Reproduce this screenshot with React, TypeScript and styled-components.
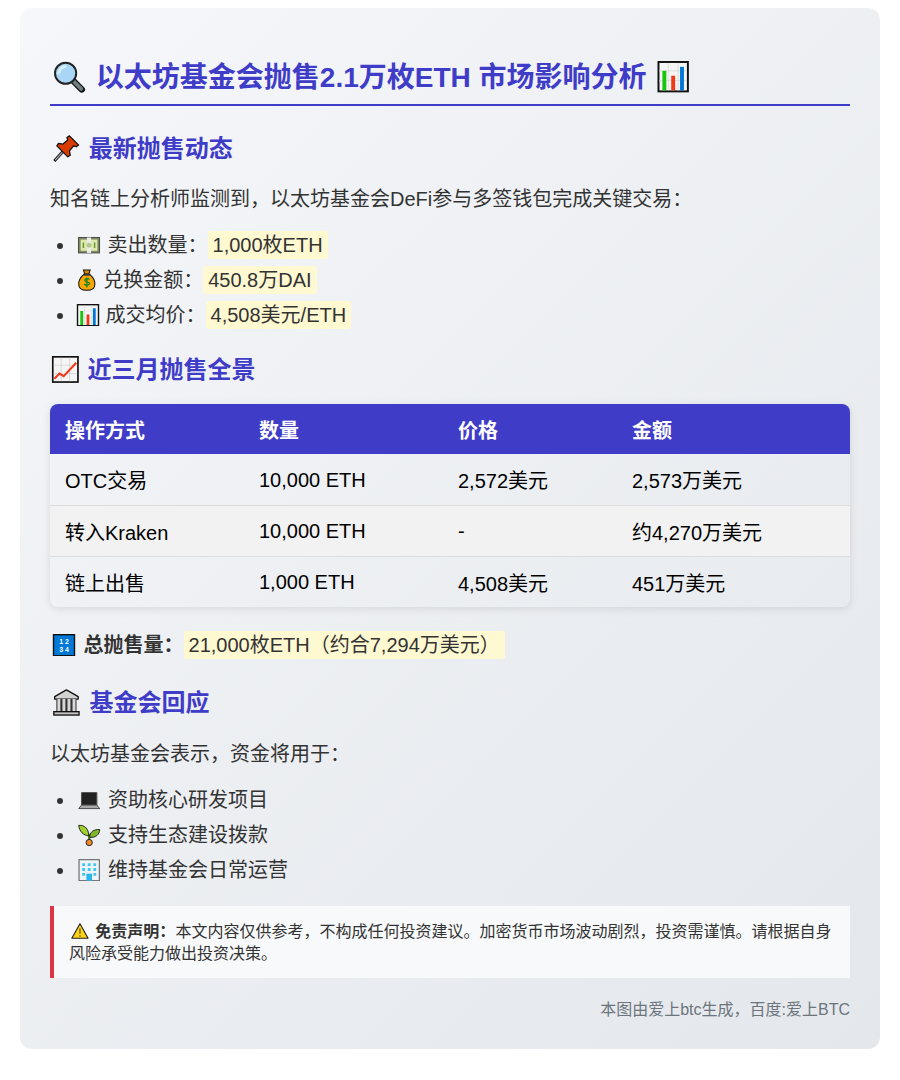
import React from "react";
import styled, { createGlobalStyle } from "styled-components";

const Global = createGlobalStyle`
  html, body { background: #fff; }
  body {
    margin: 0;
    padding: 8px 20px 31px;
    font-family: "Liberation Sans", "Noto Sans CJK SC", sans-serif;
    color: #333;
  }
`;

const Card = styled.article`
  padding: 30px;
  border-radius: 12px;
  background: linear-gradient(135deg, #f5f7fa 0%, #e4e7eb 100%);
  font-size: 20px;
  line-height: 35px;
`;

const Title = styled.h1`
  margin: 21px 0 0;
  padding-bottom: 7px;
  border-bottom: 2px solid #3f3cc8;
  color: #3f3cc8;
  font-size: 28px;
  line-height: 38px;
  font-weight: 700;
`;

const Heading = styled.h2<{ $top: number }>`
  margin: ${(p) => p.$top}px 0 0;
  color: #3f3cc8;
  font-size: 24px;
  line-height: 34px;
  font-weight: 700;
`;

const Para = styled.p<{ $top: number }>`
  margin: ${(p) => p.$top}px 0 0;
`;

const List = styled.ul`
  margin: 11px 0 0;
  padding: 0 0 0 26px;
`;

const Item = styled.li`
  margin: 0;
`;

const Mark = styled.span`
  padding: 3px 5px;
  border-radius: 3px;
  background: #fff9d2;
`;

const TableCard = styled.table`
  width: 100%;
  margin-top: 17px;
  border-collapse: separate;
  border-spacing: 0;
  table-layout: fixed;
  border-radius: 8px;
  overflow: hidden;
  box-shadow: 0 2px 8px rgba(0, 0, 0, 0.1);
  font-size: 20px;
  line-height: 30px;
  color: #000;
`;

const HeadCell = styled.th<{ $w: number }>`
  box-sizing: border-box;
  width: ${(p) => p.$w}px;
  height: 50px;
  padding: 3px 15px 0;
  background: #3f3cc8;
  color: #fff;
  font-size: 20px;
  font-weight: 700;
  text-align: left;
`;

const Row = styled.tr`
  &:nth-child(even) { background: #f2f2f2; }
`;

const Cell = styled.td<{ $cjk: boolean }>`
  box-sizing: border-box;
  height: 51px;
  padding: ${(p) => (p.$cjk ? "3px" : "0")} 15px 0;
  border-bottom: 1px solid #ddd;
  ${Row}:first-child & { height: 52px; }
  ${Row}:last-child & { height: 50px; border-bottom: 0; }
`;

const Note = styled.aside`
  margin-top: 18px;
  padding: 15px 15px 13px;
  border-left: 4px solid #dc3545;
  background: #f8f9fa;
  font-size: 16px;
  line-height: 22px;
`;

const Foot = styled.footer`
  margin-top: 23px;
  color: #6c757d;
  font-size: 16px;
  line-height: 18px;
  text-align: right;
`;

const Glyph = styled.svg<{ $adv: number }>`
  display: inline-block;
  width: ${(p) => p.$adv}em;
  height: 1.12em;
  vertical-align: -0.2em;
`;

const Ink = "#111";
type G = { adv: number };

const Search = ({ adv }: G) => (
  <Glyph $adv={adv} viewBox="0 0 32 32">
    <path d="M20 20l9 9" stroke="#111" strokeWidth="6.500" strokeLinecap="round" />
    <path d="M21 21l7.500 7.500" stroke="#6f8083" strokeWidth="3.800" strokeLinecap="round" />
    <circle cx="12.500" cy="12.500" r="10.800" fill="#a9d6f6" stroke="#222" strokeWidth="2" />
    <path d="M5.500 13a7.500 7.500 0 0 1 7.500-7.500" stroke="#d8effc" strokeWidth="3" fill="none" />
  </Glyph>
);

const Bars = ({ adv }: G) => (
  <Glyph $adv={adv} viewBox="0 0 32 32">
    <rect x="1" y="1" width="30" height="30" fill="#f5f5f5" stroke={Ink} strokeWidth="2" />
    <path d="M2 10h28M2 20h28M11 2v28M21 2v28" stroke="#dcdcdc" strokeWidth="1" />
    <rect x="5" y="10" width="4" height="20" fill="#16c60c" />
    <rect x="14" y="15" width="4" height="15" fill="#f03a17" />
    <rect x="23" y="6" width="4" height="24" fill="#0078d7" />
  </Glyph>
);

const Pin = ({ adv }: G) => (
  <Glyph $adv={adv} viewBox="0 0 32 32">
    <path d="M2 31l10-11" stroke="#111" strokeWidth="3.500" />
    <path d="M3 30l9-10" stroke="#bbb" strokeWidth="1.300" />
    <path d="M20 1l11 11-3 2-3-1-5 6 1 5-3 2-13-13 2-3 5 1 6-5-1-3z" fill="#da3b01" stroke="#111" strokeWidth="1.500" strokeLinejoin="round" />
  </Glyph>
);

const Cash = ({ adv }: G) => (
  <Glyph $adv={adv} viewBox="0 0 32 32">
    <rect x="1" y="5" width="30" height="22" fill="#7f8a68" stroke="#4c5044" strokeWidth="1.500" />
    <rect x="4" y="8" width="24" height="16" fill="#dcebaa" />
    <rect x="13" y="5" width="6" height="22" fill="#ececec" />
    <path d="M8 12v8M24 12v8" stroke="#6e8a3a" strokeWidth="2" />
    <circle cx="16" cy="16" r="3.500" fill="#8faa55" opacity="0.6" />
  </Glyph>
);

const Bag = ({ adv }: G) => (
  <Glyph $adv={adv} viewBox="0 0 32 32">
    <path d="M11 1h10l-2 6h-6z" fill="#d98a00" stroke="#111" strokeWidth="1.500" />
    <path d="M11 8h10c5 4 7 9 7 14 0 6-4 9-12 9S4 28 4 22c0-5 2-10 7-14z" fill="#f7a800" stroke="#111" strokeWidth="1.500" />
    <rect x="10.500" y="6.500" width="11" height="2.500" fill="#333" />
    <path d="M20 15c-1-2-7-2-7 1s7 2 7 5-6 3-8 1M16 12v15" stroke="#0a7d2c" strokeWidth="1.800" fill="none" />
  </Glyph>
);

const Trend = ({ adv }: G) => (
  <Glyph $adv={adv} viewBox="0 0 32 32">
    <rect x="1" y="1" width="30" height="30" fill="#f5f5f5" stroke={Ink} strokeWidth="2" />
    <path d="M2 11h28M2 21h28M11 2v28M21 2v28" stroke="#d4d4d4" strokeWidth="1" />
    <path d="M3 27l6-6 5 3 15-16" stroke="#f03a17" strokeWidth="2.400" fill="none" />
  </Glyph>
);

const Numbers = ({ adv }: G) => (
  <Glyph $adv={adv} viewBox="0 0 32 32">
    <rect x="1" y="1" width="30" height="30" fill="#0078d7" stroke={Ink} strokeWidth="2" />
    <text x="16" y="14" fontSize="10" fontWeight="700" fill="#fff" textAnchor="middle" fontFamily="Liberation Sans">1 2</text>
    <text x="16" y="26" fontSize="10" fontWeight="700" fill="#fff" textAnchor="middle" fontFamily="Liberation Sans">3 4</text>
  </Glyph>
);

const Bank = ({ adv }: G) => (
  <Glyph $adv={adv} viewBox="0 0 32 32">
    <path d="M16 1L2 9v3h28V9z" fill="#d2d2d2" stroke="#111" strokeWidth="1.600" strokeLinejoin="round" />
    <rect x="4" y="12" width="24" height="15" fill="#333" />
    <path d="M7 12v15M13 12v15M19 12v15M25 12v15" stroke="#d8d8d8" strokeWidth="3.500" />
    <rect x="1" y="27" width="30" height="4" fill="#c4c4c4" stroke="#111" strokeWidth="1.600" />
  </Glyph>
);

const Laptop = ({ adv }: G) => (
  <Glyph $adv={adv} viewBox="0 0 32 32">
    <rect x="5" y="5" width="22" height="18" rx="1" fill="#222" stroke="#555" strokeWidth="1.500" />
    <path d="M5 23h22l4 5H1z" fill="#aaa" stroke="#333" strokeWidth="1.200" strokeLinejoin="round" />
  </Glyph>
);

const Sprout = ({ adv }: G) => (
  <Glyph $adv={adv} viewBox="0 0 32 32">
    <path d="M16 14v10" stroke="#3c6d12" strokeWidth="3" />
    <path d="M15 17C8 16 2 11 1 2c8-1 15 5 14 15z" fill="#a2d02f" stroke="#222" strokeWidth="1.400" />
    <path d="M17 19c-1-7 6-12 14-11 0 7-6 12-14 11z" fill="#7fb82a" stroke="#222" strokeWidth="1.400" />
    <circle cx="16" cy="26.500" r="4.500" fill="#ef8a2c" stroke="#222" strokeWidth="1.400" />
  </Glyph>
);

const Office = ({ adv }: G) => (
  <Glyph $adv={adv} viewBox="0 0 32 32">
    <rect x="1.500" y="1" width="29" height="30" fill="#eef4f7" stroke="#666" strokeWidth="1.600" />
    <path d="M6 6h4v4H6zM14 6h4v4h-4zM22 6h4v4h-4zM6 13h4v4H6zM14 13h4v4h-4zM22 13h4v4h-4zM6 20h4v4H6zM22 20h4v4h-4z" fill="#3fc7f4" />
    <rect x="12" y="21" width="8" height="10" fill="#2bb5ef" />
  </Glyph>
);

const Warn = ({ adv }: G) => (
  <Glyph $adv={adv} viewBox="0 0 32 32">
    <path d="M16 3L1.500 29h29z" fill="#fcd116" stroke="#222" strokeWidth="2" strokeLinejoin="round" />
    <path d="M16 11v10M16 23.500v3" stroke="#8a7a10" strokeWidth="3" />
  </Glyph>
);

const rows = [
  ["OTC交易", "10,000 ETH", "2,572美元", "2,573万美元"],
  ["转入Kraken", "10,000 ETH", "-", "约4,270万美元"],
  ["链上出售", "1,000 ETH", "4,508美元", "451万美元"],
];

const hasCjk = (s: string) => /[\u4e00-\u9fff]/.test(s);

export default function App() {
  return (
    <>
      <Global />
      <Card>
        <Title><Search adv={1.36} /> 以太坊基金会抛售2.1万枚ETH 市场影响分析 <Bars adv={1.37} /></Title>
        <Heading $top={26}><Pin adv={1.34} /> 最新抛售动态</Heading>
        <Para $top={16}>知名链上分析师监测到，以太坊基金会DeFi参与多签钱包完成关键交易：</Para>
        <List>
          <Item><Cash adv={1.3} /> 卖出数量：<Mark>1,000枚ETH</Mark></Item>
          <Item><Bag adv={1.08} /> 兑换金额：<Mark>450.8万DAI</Mark></Item>
          <Item><Bars adv={1.2} /> 成交均价：<Mark>4,508美元/ETH</Mark></Item>
        </List>
        <Heading $top={20}><Trend adv={1.28} /> 近三月抛售全景</Heading>
        <TableCard>
          <thead>
            <tr>
              <HeadCell $w={194}>操作方式</HeadCell>
              <HeadCell $w={199}>数量</HeadCell>
              <HeadCell $w={174}>价格</HeadCell>
              <HeadCell $w={233}>金额</HeadCell>
            </tr>
          </thead>
          <tbody>
            {rows.map((r) => (
              <Row key={r[0]}>
                {r.map((c) => <Cell key={c} $cjk={hasCjk(c)}>{c}</Cell>)}
              </Row>
            ))}
          </tbody>
        </TableCard>
        <Para $top={21}><Numbers adv={1.4} /> <strong>总抛售量：</strong><Mark>21,000枚ETH（约合7,294万美元）</Mark></Para>
        <Heading $top={23}><Bank adv={1.37} /> 基金会回应</Heading>
        <Para $top={17}>以太坊基金会表示，资金将用于：</Para>
        <List>
          <Item><Laptop adv={1.32} /> 资助核心研发项目</Item>
          <Item><Sprout adv={1.32} /> 支持生态建设拨款</Item>
          <Item><Office adv={1.32} /> 维持基金会日常运营</Item>
        </List>
        <Note><Warn adv={1.37} /> <strong>免责声明：</strong>本文内容仅供参考，不构成任何投资建议。加密货币市场波动剧烈，投资需谨慎。请根据自身风险承受能力做出投资决策。</Note>
        <Foot>本图由爱上btc生成，百度:爱上BTC</Foot>
      </Card>
    </>
  );
}
